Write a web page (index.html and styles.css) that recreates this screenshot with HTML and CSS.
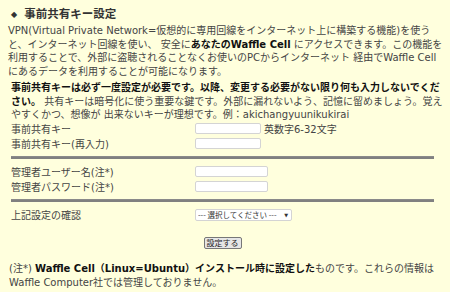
FILE: index.html
```html
<html>
    <head>
        <title>事前共有キー設定</title>
        <link rel="stylesheet" href="styles.css">
    </head>
    <body>
        <div class="page">
            <h2 class="title"><span class="mark">◆</span>事前共有キー設定</h2>
            <p class="intro">VPN(Virtual Private Network=仮想的に専用回線をインターネット上に構築する機能)を使うと、インターネット回線を使い、 安全に<b>あなたのWaffle Cell</b> にアクセスできます。この機能を利用することで、外部に盗聴されることなくお使いのPCからインターネット 経由でWaffle Cellにあるデータを利用することが可能になります。</p>
            <div class="form">
                <p class="notice"><b>事前共有キーは必ず一度設定が必要です。以降、変更する必要がない限り何も入力しないでください。</b> 共有キーは暗号化に使う重要な鍵です。外部に漏れないよう、記憶に留めましょう。覚えやすくかつ、想像が 出来ないキーが理想です。例：akichangyuunikukirai</p>
                <div class="row">
                    <label>事前共有キー</label>
                    <input type="password" class="key">
                    <span class="hint">英数字6-32文字</span>
                </div>
                <div class="row">
                    <label>事前共有キー(再入力)</label>
                    <input type="password" class="key">
                </div>
                <hr>
                <div class="row">
                    <label>管理者ユーザー名(注*)</label>
                    <input type="text" class="admin">
                </div>
                <div class="row">
                    <label>管理者パスワード(注*)</label>
                    <input type="password" class="admin">
                </div>
                <hr>
                <div class="row">
                    <label>上記設定の確認</label>
                    <span class="pick">
                        <select>
                            <option>--- 選択してください ---</option>
                            <option>はい</option>
                        </select>
                        <span class="arrow">▼</span>
                    </span>
                </div>
                <div class="submit"><button>設定する</button></div>
            </div>
            <p class="note">(注*) <b>Waffle Cell（Linux=Ubuntu）インストール時に設定した</b>ものです。これらの情報はWaffle Computer社では管理しておりません。</p>
        </div>
    </body>
</html>
```

FILE: styles.css
```css
*{
    margin: 0;
    padding: 0;
    box-sizing: border-box;
}
body{
    background-color: #ffffdd;
    font-family: "DejaVu Sans", "Noto Sans CJK JP", sans-serif;
    font-size: 10px;
    color: #444;
}
.page{
    width: 444px;
    padding: 6px 0 0 8px;
}
.title{
    font-size: 11.5px;
    font-weight: bold;
    line-height: 16px;
    color: #333;
    padding-left: 3px;
}
.mark{
    font-size: 8px;
    margin-right: 7px;
    vertical-align: 1px;
}
.intro{
    line-height: 13.5px;
    margin-top: 1px;
}
b{
    color: #111;
}
.form{
    padding-left: 3px;
}
.notice{
    line-height: 13.5px;
    margin-top: 3px;
}
.row{
    display: flex;
    align-items: center;
    height: 14.5px;
}
.row label{
    width: 184px;
}
.row input{
    height: 11px;
    border: 1px solid #d4d4d4;
    border-radius: 2px;
    background: #fff;
    outline: 0;
}
.key{
    width: 66px;
}
.admin{
    width: 73px;
}
.hint{
    margin-left: 3px;
}
hr{
    width: 423px;
    height: 3px;
    border: 0;
    background: #808080;
    border-top: 1px solid #8a8a8a;
    margin: 5px 0 6px;
}
.pick{
    position: relative;
    display: inline-block;
    height: 12px;
}
select{
    appearance: none;
    -webkit-appearance: none;
    width: 97px;
    height: 12px;
    font-size: 7.5px;
    line-height: 10px;
    font-family: "Noto Sans CJK JP", sans-serif;
    border: 1px solid #d4d4d4;
    border-radius: 2px;
    background: #fff;
    color: #333;
    padding: 0 0 0 2px;
    outline: 0;
}
.arrow{
    position: absolute;
    right: 4px;
    top: 3px;
    font-size: 5px;
    line-height: 6px;
    color: #333;
    pointer-events: none;
}
.submit{
    width: 423px;
    text-align: center;
    margin-top: 15px;
}
.submit button{
    font-size: 8px;
    font-family: "Noto Sans CJK JP", sans-serif;
    height: 12px;
    line-height: 10px;
    padding: 0 2px;
    background: #e6e6e6;
    border: 1px solid #777;
    border-radius: 2px;
    color: #222;
}
.note{
    line-height: 13.5px;
    margin-top: 13px;
    padding-left: 1px;
}
```
